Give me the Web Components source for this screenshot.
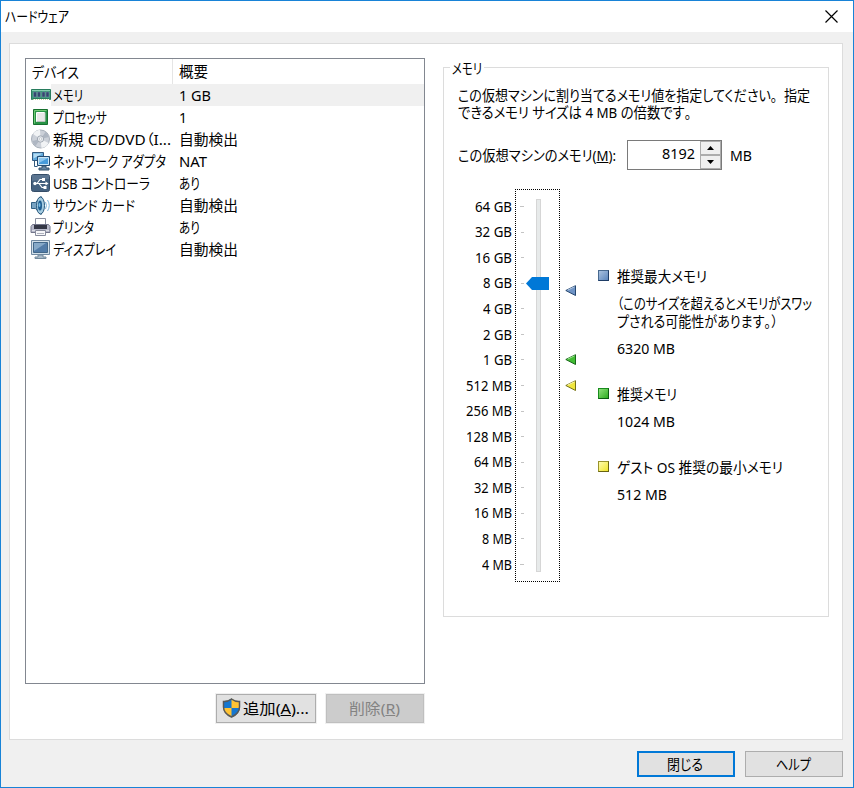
<!DOCTYPE html>
<html lang="ja">
<head>
<meta charset="utf-8">
<title>ハードウェア</title>
<style>
    body {
        margin: 0;
        font: 14.5px/18px "Noto Sans", "Noto Sans CJK JP", sans-serif;
        font-feature-settings: "palt";
        color: #000;
    }
</style>
</head>
<body>
<hardware-dialog></hardware-dialog>

<script>
const define = (name, html, setup) => {
    const template = document.createElement('template')
    template.innerHTML = html

    customElements.define(name, class extends HTMLElement {
        constructor () {
            super()
            this.attachShadow({ mode: 'open' })
            .appendChild(template.content.cloneNode(true))
        }

        connectedCallback () {
            if (setup) setup(this, this.shadowRoot)
        }
    })
}

const icons = {
    memory: `<path fill="#3c9a78" stroke="#287c5d" d="M.5 3.5h19v10h-1v-1h-17v1h-1z"/>
        <path stroke="#86cdb0" d="M1 4.5h18"/>
        <path fill="#34466f" stroke="#7893a8" stroke-width=".5" d="M2.5 6h3v5h-3zM6.5 6h3v5h-3zM11 6h3v5h-3zM15 6h3v5h-3z"/>
        <path stroke="#c7d2a0" stroke-dasharray="1 1" d="M2 13.5h16"/>`,
    cpu: `<path fill="#289346" stroke="#17702e" d="M2.5 1.5h14v15h-14z"/>
        <path fill="none" stroke="#71cb74" d="M3.5 15.5v-13h12"/>
        <path fill="#e8e8e8" stroke="#fff" d="M5.5 4.5h8v9h-8z"/><path stroke="#b8c0ba" d="M6 13.5h8v-9"  fill="none"/>`,
    disc: `<circle cx="9.5" cy="9" r="9" fill="#cbd0d8" stroke="#a7afb9"/>
        <path fill="#f1f3f5" d="M9.5 9 2 4a9 9 0 0 1 7-4.3zM9.5 9l8 4a9 9 0 0 1-7 5z"/>
        <path fill="#aeb6c2" d="m9.5 9 5-7a9 9 0 0 1 3.5 5zM9.5 9l-8 2a9 9 0 0 0 3 5z"/>
        <circle cx="9.5" cy="9" r="3.2" fill="#e5e8ed" stroke="#a1a9b3"/><circle cx="9.5" cy="9" r="1.2" fill="#fff" stroke="#a5acb4" stroke-width=".5"/>`,
    network: `<path fill="#5fa8dc" stroke="#335b80" d="M1.5.5h11v8h-11z"/><path fill="#b4dcf3" d="M2.5 1.5h9l-9 5z"/>
        <path fill="none" stroke="#335b80" d="M3.5 9v5.5h3"/>
        <path fill="#479bda" stroke="#244c73" d="M6.5 4.5h12v9h-12z"/><path fill="none" stroke="#cae5f6" d="M7.5 12.5v-7h10v7z"/>
        <path fill="#8cc6ee" d="M8 6h9l-9 5z"/><path fill="#6887a4" stroke="#33526e" d="M11 14h4v2h3v2H8v-2h3z"/>`,
    usb: `<rect x=".5" y=".5" width="18" height="17" rx="2" fill="#44617f" stroke="#354d68"/>
        <path fill="#718aa3" d="M1 1h17v4L1 7z" opacity=".5"/>
        <path fill="none" stroke="#fff" stroke-width="1.2" d="M4 9.5h12M6 9.5l3-4h3M8 9.5l3 4h3"/>
        <circle cx="4" cy="9.5" r="1.7" fill="#fff"/><path fill="#fff" d="m14.5 7.5 3 2-3 2zM11 4h3v3h-3zM12.5 12h3v3h-3z"/>`,
    sound: `<path fill="#78a3c2" stroke="#315f83" d="M.5 6.5h4L10 .5v18l-5.500-6h-4z"/>
        <ellipse cx="9.500" cy="9.500" rx="4" ry="8.500" fill="#a4cbe0" stroke="#29587d"/>
        <ellipse cx="9" cy="9.500" rx="2" ry="5" fill="#1e5f92"/><ellipse cx="8.500" cy="9" rx="1" ry="2" fill="#76bae2"/>
        <path fill="none" stroke="#7cb7dc" d="M14.500 6q2 3.500 0 7M16.500 4q3.500 5.500 0 11"/>`,
    printer: `<path fill="#fff" stroke="#8b90a0" d="M4.500.5h10v7h-10z"/>
        <path fill="#b7b9ca" stroke="#73768b" d="M1.500 6.500h16l1.500 2v6H0v-6z"/>
        <path fill="#343746" d="M3 7h13v4H3z"/><path stroke="#dcdde5" d="M1 12.500h17"/>
        <path fill="#f7f7fa" stroke="#878b9c" d="M4.500 12.500h10v5h-10z"/><path stroke="#aeb2bd" d="M6 15.500h7"/>`,
    display: `<path fill="#d2e0e9" stroke="#7089a1" d="M.5.5h18v14H.5z"/>
        <path fill="#527ca8" stroke="#426789" d="M2.500 2.500h14v10h-14z"/><path fill="#86a9c8" d="M3 3h12L3 11z"/>
        <path fill="#a9bac9" stroke="#728a9d" d="M7 15h5v2h3v1.500H4V17h3z"/>`,
    shield: `<path fill="#ffc334" d="M9.500.5q4 3 8.500 2.500V9q0 7-8.500 10.500Q1 16 1 9V3Q5.500 3.500 9.500.5z"/>
        <path fill="#1677cf" d="M1 3Q5.500 3.500 9.500.5V10H1zM9.500 10H18q-1 6.500-8.500 9.500z"/>
        <path fill="none" stroke="#57595b" stroke-width="1.500" d="M9.500 1q4 3 8 2.500V9q0 6.500-8 10-8-3.500-8-10V3.500q4 .5 8-2.500z"/>`
}

// rows are defined before the icon so that each icon already has its name
define('device-row', `
<style>
    :host { display: flex; height: 22px; padding-left: 5px; }
    pixel-icon { margin-top: 2px; }
    .cells {
        flex: 1;
        display: grid;
        grid-template-columns: 126px 1fr;
        align-items: center;
        padding: 0 0 1px 2px;
    }
    :host([selected]) .cells { background: #f0f0f0; }
</style>
<pixel-icon></pixel-icon>
<div class="cells"><slot></slot><slot name="summary"></slot></div>`, (host, root) => {
    root.querySelector('pixel-icon').setAttribute('name', host.getAttribute('icon'))
})

define('device-list', `
<style>
    :host {
        display: block;
        box-sizing: border-box;
        width: 400px;
        height: 626px;
        border: 1px solid #828790;
        background: #fff;
    }
    .head {
        display: grid;
        grid-template-columns: 140px 1fr;
        align-items: center;
        height: 25px;
        padding-left: 6px;
    }
    .head div { padding-bottom: 2px; }
    .head div:last-child {
        border-left: 1px solid #e5e5e5;
        padding: 1px 0 4px 6px;
    }
</style>
<div class="head">
    <div><fit-text w="47">デバイス</fit-text></div>
    <div><fit-text w="29">概要</fit-text></div>
</div>
<slot></slot>`)

define('push-button', `
<style>
    :host {
        display: flex;
        box-sizing: border-box;
        width: 98px;
        height: 26px;
        padding-right: 2px;
        justify-content: center;
        align-items: center;
        border: 1px solid #adadad;
        background: #e1e1e1;
        white-space: nowrap;
    }
    :host([default]) { border: 2px solid #0078d7; }
    :host([tall]) { height: 29px; width: 100px; padding-bottom: 2px; box-shadow: 0 0 0 1px #f0f0f0; }
    :host([disabled]) { width: 98px; background: #ccc; border-color: #bfbfbf; color: #838383; }
</style>
<slot></slot>`)

define('group-box', `
<style>
    :host {
        display: block;
        box-sizing: border-box;
        width: 386px;
        height: 550px;
        border: 1px solid #dcdcdc;
    }
    .legend {
        display: block;
        width: 32px;
        height: 18px;
        margin: -11px 0 1px 6px;
        padding-left: 2px;
        background: #fff;
    }
</style>
<div class="legend"><slot name="legend"></slot></div>
<slot></slot>`)

define('number-spinner', `
<style>
    :host {
        display: flex;
        box-sizing: border-box;
        width: 95px;
        height: 30px;
        border: 1px solid #7a7a7a;
        background: #fff;
    }
    .value { flex: 1; padding: 1px 5px 0 0; text-align: right; }
    .arrows { display: grid; grid-template-rows: 14px 14px; width: 21px; }
    svg { display: block; box-sizing: border-box; width: 21px; height: 14px; border: 1px solid #adadad; background: #f0f0f0; }
</style>
<div class="value"><slot></slot></div>
<div class="arrows">
    <svg viewBox="0 0 19 12"><path d="M6 8h7L9.500 4z"/></svg>
    <svg viewBox="0 0 19 12"><path d="M6 4h7L9.500 8z"/></svg>
</div>`)

define('memory-slider', `
<style>
    :host { display: flex; height: 393px; }
    .scale {
        width: 67px;
        padding-top: 2.600px;
        display: flex;
        flex-direction: column;
        align-items: flex-end;
        margin-right: 3px;
    }
    .scale div { height: 25.570px; line-height: 25.570px; }
    svg { display: block; overflow: visible; }
</style>
<div class="scale"></div>
<svg width="65" height="393">
    <path fill="none" stroke="#000" stroke-dasharray="1 1" d="M0 .5h45M0 392.500h45M.5 0v393M44.500 0v393"/>
    <g class="ticks" stroke="#c4c4c4"></g>
    <rect x="21.500" y="10.500" width="4" height="372" fill="#e7eaea" stroke="#d6d6d6"/>
    <path fill="#0078d7" d="M11 94.500 17 88h17v13H17z"/>
    <g id="markers" stroke-width="1"></g>
</svg>`, (host, root) => {
    const labels = ['64 GB', '32 GB', '16 GB', '8 GB', '4 GB', '2 GB', '1 GB', '512 MB', '256 MB',
        '128 MB', '64 MB', '32 MB', '16 MB', '8 MB', '4 MB']
    const widths = { 4: 29, 5: 37, 6: 46 }
    root.querySelector('.scale').innerHTML = labels.map(label => {
        const w = widths[label.length] + (label.endsWith('MB') && label.length < 6 ? 1 : 0)
        return `<div><fit-text w="${w}">${label}</fit-text></div>`
    }).join('')
    root.querySelector('.ticks').innerHTML = labels.map((label, i) => {
        const y = Math.round(17 + i * 25.57) + .5
        const x = i === 0 || i === labels.length - 1 ? 5 : 6
        return `<path d="M${x} ${y}H9"/>`
    }).join('')
    root.querySelector('#markers').innerHTML = [
        [96, '#6f94c6', '#24466f', '#b8cce5'],
        [165, '#42bd33', '#176619', '#a4e798'],
        [191, '#f0e63d', '#747017', '#fffbb0']
    ].map(([y, fill, line, light]) => `<g transform="translate(50 ${y})">
        <path fill="${fill}" stroke="${line}" d="M.8 5.500 10.500.7v9.800z"/>
        <path fill="none" stroke="${light}" d="M2.500 5.200 9.500 1.800"/></g>`).join('')
})

define('legend-item', `
<style>
    :host { display: grid; grid-template-columns: 19px 1fr; }
    i {
        box-sizing: border-box;
        width: 11px;
        height: 11px;
        margin-top: 3px;
        border: 1px solid;
    }
    :host([tone="blue"]) i { background: linear-gradient(135deg, #a9c1df, #5c86bd); border-color: #48698f #1e3c66 #1e3c66 #48698f; }
    :host([tone="green"]) i { background: linear-gradient(135deg, #8fe07d, #2dac20); border-color: #188c1d #0b5d12 #0b5d12 #188c1d; }
    :host([tone="yellow"]) i { background: linear-gradient(135deg, #fffcb0, #f0e52c); border-color: #99932c #686412 #686412 #99932c; }
    .text { display: grid; row-gap: 9px; }
</style>
<i></i>
<div class="text"><slot></slot></div>`)

define('hardware-dialog', `
<style>
    :host {
        display: flex;
        flex-direction: column;
        box-sizing: border-box;
        width: 854px;
        height: 788px;
        border: 1px solid #1883d7;
        background: #f0f0f0;
    }
    header {
        display: flex;
        justify-content: space-between;
        height: 31px;
        padding: 0 15px 0 4px;
        align-items: center;
        background: #fff;
    }
    header fit-text { margin-bottom: 2px; }
    header svg { display: block; }
    main {
        display: flex;
        box-sizing: border-box;
        width: 834px;
        height: 697px;
        margin: 11px 0 0 8px;
        padding: 14px 0 0 15px;
        border: 1px solid #dcdcdc;
        background: #fff;
    }
    group-box { margin: 9px 0 0 18px; }
    .buttons, footer { display: flex; justify-content: flex-end; gap: 10px; }
    .buttons { margin: 10px 1px 0 0; }
    .buttons push-button { flex: none; }
    .buttons pixel-icon { margin-right: 1px; }
    footer { margin: 11px 10px 0 0; }
    .note { padding: 7.500px 0 0 14px; }
    .note div { height: 18px; }
    .note div + div { margin-top: -.5px; }
    .wide { font-feature-settings: normal; }
    .amount { display: flex; margin: 21px 0 0 14px; align-items: center; height: 30px; }
    .amount number-spinner { margin: 0 8px 0 11px; }
    .settings { display: flex; margin-top: 19px; padding-left: 1px; }
    .legends { padding: 78px 0 0 18px; width: 220px; }
    .legends legend-item { margin-bottom: 28px; }
    .wrap { margin: -2px 0 2px; }
    .wrap div { height: 18px; }
</style>
<header>
    <fit-text w="64">ハードウェア</fit-text>
    <svg width="13" height="13"><path fill="none" stroke="#000" stroke-width="1.200" d="m.5.500 12 12M12.500.500l-12 12"/></svg>
</header>
<main>
    <section>
        <device-list>
            <device-row icon="memory" selected><fit-text w="30">メモリ</fit-text><fit-text slot="summary" w="32">1 GB</fit-text></device-row>
            <device-row icon="cpu"><fit-text w="54">プロセッサ</fit-text><fit-text slot="summary" w="8">1</fit-text></device-row>
            <device-row icon="disc"><fit-text w="118">新規 CD/DVD（I...</fit-text><fit-text slot="summary" w="59">自動検出</fit-text></device-row>
            <device-row icon="network"><fit-text w="113">ネットワーク アダプタ</fit-text><fit-text slot="summary" w="28">NAT</fit-text></device-row>
            <device-row icon="usb"><fit-text w="97">USB コントローラ</fit-text><fit-text slot="summary" w="21">あり</fit-text></device-row>
            <device-row icon="sound"><fit-text w="82">サウンド カード</fit-text><fit-text slot="summary" w="59">自動検出</fit-text></device-row>
            <device-row icon="printer"><fit-text w="41">プリンタ</fit-text><fit-text slot="summary" w="21">あり</fit-text></device-row>
            <device-row icon="display"><fit-text w="63">ディスプレイ</fit-text><fit-text slot="summary" w="59">自動検出</fit-text></device-row>
        </device-list>
        <div class="buttons">
            <push-button tall><pixel-icon name="shield"></pixel-icon><fit-text w="66">追加(<u>A</u>)...</fit-text></push-button>
            <push-button tall disabled><fit-text w="51">削除(<u>R</u>)</fit-text></push-button>
        </div>
    </section>
    <group-box>
        <fit-text slot="legend" w="30">メモリ</fit-text>
        <div class="note">
            <div><fit-text w="352">この仮想マシンに割り当てるメモリ値を指定してください<span class="wide">。</span>指定</fit-text></div>
            <div><fit-text w="240">できるメモリ サイズは 4 MB の倍数です<span class="wide">。</span></fit-text></div>
        </div>
        <div class="amount">
            <fit-text w="158">この仮想マシンのメモリ(<u>M</u>):</fit-text>
            <number-spinner><fit-text w="33">8192</fit-text></number-spinner>
            <fit-text w="22">MB</fit-text>
        </div>
        <div class="settings">
            <memory-slider></memory-slider>
            <div class="legends">
                <legend-item tone="blue">
                    <fit-text w="90">推奨最大メモリ</fit-text>
                    <div class="wrap">
                        <div><fit-text w="195">（このサイズを超えるとメモリがスワッ</fit-text></div>
                        <div><fit-text w="167">プされる可能性があります<span class="wide">。）</span></fit-text></div>
                    </div>
                    <fit-text w="58">6320 MB</fit-text>
                </legend-item>
                <legend-item tone="green">
                    <fit-text w="60">推奨メモリ</fit-text>
                    <fit-text w="58">1024 MB</fit-text>
                </legend-item>
                <legend-item tone="yellow">
                    <fit-text w="166">ゲスト OS 推奨の最小メモリ</fit-text>
                    <fit-text w="50">512 MB</fit-text>
                </legend-item>
            </div>
        </div>
    </group-box>
</main>
<footer>
    <push-button default><fit-text w="36">閉じる</fit-text></push-button>
    <push-button><fit-text w="35">ヘルプ</fit-text></push-button>
</footer>`)

define('pixel-icon', `
<style>
    :host { display: block; width: 20px; height: 20px; flex: none; }
    svg { display: block; overflow: visible; }
</style>
<svg width="20" height="20" viewBox="0 0 20 20"></svg>`, (host, root) => {
    root.querySelector('svg').innerHTML = icons[host.getAttribute('name')]
})

// condenses a line of text to the width given in "w"; defined last so its styles are known
define('fit-text', `
<style>
    :host { display: inline-block; height: 18px; line-height: 18px; vertical-align: middle; text-align: left; }
    span { display: inline-block; height: 18px; white-space: nowrap; transform-origin: 0 0; }
</style>
<span><slot></slot></span>`, (host, root) => {
    const span = root.querySelector('span')
    const width = Number(host.getAttribute('w'))
    span.style.transform = 'none'
    const natural = span.getBoundingClientRect().width
    host.style.width = width + 'px'
    span.style.transform = `scaleX(${width / natural})`
})
</script>
</body>
</html>
